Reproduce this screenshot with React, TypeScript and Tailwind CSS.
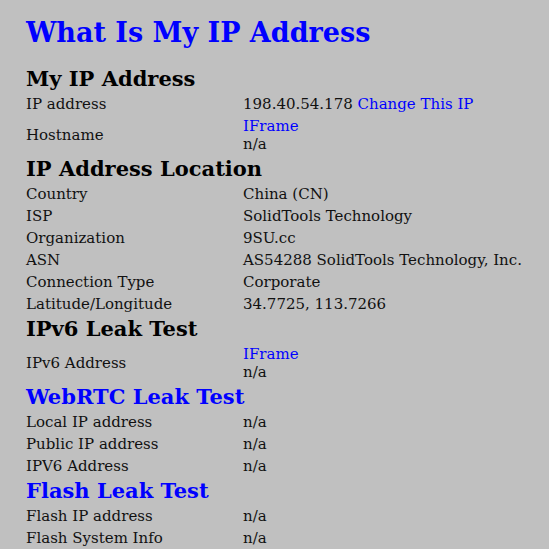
import * as React from 'react';

type Row = { label: string; value: React.ReactNode; tall?: boolean };

const serif = "font-['DejaVu_Serif','Liberation_Serif',serif]";

function IFrameValue() {
  return (
    <div className="flex flex-col leading-[18px]">
      <a className="text-[#0000ff]">IFrame</a>
      <span>n/a</span>
    </div>
  );
}

function Heading({ children, blue }: { children: React.ReactNode; blue?: boolean }) {
  return (
    <h2
      className={`flex h-[28px] items-center text-[21px] font-bold ${blue ? 'text-[#0000ff]' : 'text-black'}`}
    >
      {children}
    </h2>
  );
}

function InfoTable({ rows }: { rows: Row[] }) {
  return (
    <div className="flex flex-col">
      {rows.map((row) => (
        <div
          key={row.label}
          className={`grid grid-cols-[217px_1fr] items-center ${row.tall ? 'h-[40px]' : 'h-[22px]'}`}
        >
          <span>{row.label}</span>
          <div>{row.value}</div>
        </div>
      ))}
    </div>
  );
}

export default function App() {
  return (
    <div className={`min-h-[549px] w-full bg-[#c0c0c0] px-[26px] text-[15px] text-[#111] ${serif}`}>
      <h1 className="flex h-[65px] items-center pt-[1px] text-[27px] font-bold text-[#0000ff]">
        What Is My IP Address
      </h1>

      <Heading>My IP Address</Heading>
      <InfoTable
        rows={[
          {
            label: 'IP address',
            value: (
              <>
                198.40.54.178 <a className="text-[#0000ff]">Change This IP</a>
              </>
            ),
          },
          { label: 'Hostname', value: <IFrameValue />, tall: true },
        ]}
      />

      <Heading>IP Address Location</Heading>
      <InfoTable
        rows={[
          { label: 'Country', value: 'China (CN)' },
          { label: 'ISP', value: 'SolidTools Technology' },
          { label: 'Organization', value: '9SU.cc' },
          { label: 'ASN', value: 'AS54288 SolidTools Technology, Inc.' },
          { label: 'Connection Type', value: 'Corporate' },
          { label: 'Latitude/Longitude', value: '34.7725, 113.7266' },
        ]}
      />

      <Heading>IPv6 Leak Test</Heading>
      <InfoTable rows={[{ label: 'IPv6 Address', value: <IFrameValue />, tall: true }]} />

      <Heading blue>WebRTC Leak Test</Heading>
      <InfoTable
        rows={[
          { label: 'Local IP address', value: 'n/a' },
          { label: 'Public IP address', value: 'n/a' },
          { label: 'IPV6 Address', value: 'n/a' },
        ]}
      />

      <Heading blue>Flash Leak Test</Heading>
      <InfoTable
        rows={[
          { label: 'Flash IP address', value: 'n/a' },
          { label: 'Flash System Info', value: 'n/a' },
        ]}
      />
    </div>
  );
}
